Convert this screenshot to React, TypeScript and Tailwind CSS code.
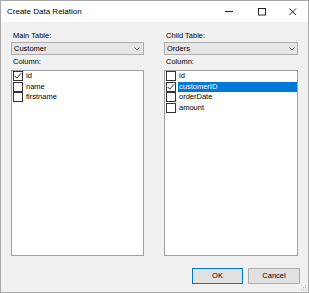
import React from "react";

const Check = () => (
  <svg width="8" height="8" viewBox="0 0 8 8" className="block">
    <polyline points="0.8,4 2.8,6.2 7.2,1.2" fill="none" stroke="#333" strokeWidth="1" />
  </svg>
);

const Box = ({ checked }: { checked?: boolean }) => (
  <div className="w-[10px] h-[10px] border border-[#333333] bg-white flex items-center justify-center shrink-0">
    {checked ? <Check /> : null}
  </div>
);

const Chevron = () => (
  <svg width="6" height="4" viewBox="0 0 6 4" className="block">
    <polyline points="0.5,0.5 3,3 5.5,0.5" fill="none" stroke="#555" strokeWidth="1" />
  </svg>
);

type Item = { name: string; checked?: boolean; selected?: boolean };

const Panel = ({
  label,
  value,
  items,
  width,
  chevPad,
}: {
  label: string;
  value: string;
  items: Item[];
  width: string;
  chevPad: string;
}) => (
  <div className={`${width} flex flex-col`}>
    <div className="h-[12px] leading-[12px] pl-[2px] text-black">{label}</div>
    <div className={`h-[13px] border border-[#adadad] bg-[#e5e5e5] flex items-center justify-between pl-[2px] ${chevPad}`}>
      <span className="leading-[11px]">{value}</span>
      <Chevron />
    </div>
    <div className="mt-[1px] h-[12px] leading-[12px] pl-[2px]">Column:</div>
    <div className="mt-[2px] h-[186px] border border-[#a0a0a0] bg-white pt-0 pl-[1px] pr-0">
      {items.map((it) => (
        <div key={it.name} className="h-[10.5px] flex items-start">
          <Box checked={it.checked} />
          <div
            className={`ml-[2px] h-[10px] leading-[10px] pl-[1px] ${
              it.selected ? "flex-1 bg-[#0078d7] text-white" : "text-black"
            }`}
          >
            {it.name}
          </div>
        </div>
      ))}
    </div>
  </div>
);

export default function App() {
  return (
    <div
      className="w-[309px] h-[293px] border border-[#a8a8a8] bg-[#f0f0f0] flex flex-col text-[7.5px] text-black"
      style={{ fontFamily: '"Liberation Sans", Arial, sans-serif' }}
    >
      <div className="h-[21px] bg-white flex items-center shrink-0">
        <span className="pl-[6px] text-[8px] leading-[10px] pt-[1px] flex-1">Create Data Relation</span>
        <div className="flex items-center">
          <svg width="9" height="9" viewBox="0 0 9 9" className="block mr-[24px]">
            <line x1="0" y1="4.5" x2="8" y2="4.5" stroke="#222" strokeWidth="1" />
          </svg>
          <svg width="8" height="8" viewBox="0 0 8 8" className="block mr-[23px]">
            <rect x="0.5" y="0.5" width="7" height="6.5" fill="none" stroke="#222" strokeWidth="1" />
          </svg>
          <svg width="8" height="8" viewBox="0 0 8 8" className="block mr-[11px]">
            <line x1="0.5" y1="0.5" x2="7" y2="7" stroke="#222" strokeWidth="1" />
            <line x1="7" y1="0.5" x2="0.5" y2="7" stroke="#222" strokeWidth="1" />
          </svg>
        </div>
      </div>
      <div className="pt-[8px] pl-[10px] flex gap-[20px]">
        <Panel
          label="Main Table:"
          value="Customer"
          width="w-[133px]"
          chevPad="pr-[3px]"
          items={[{ name: "id", checked: true }, { name: "name" }, { name: "firstname" }]}
        />
        <Panel
          label="Child Table:"
          value="Orders"
          width="w-[134px]"
          chevPad="pr-[2px]"
          items={[
            { name: "id" },
            { name: "customerID", checked: true, selected: true },
            { name: "orderDate" },
            { name: "amount" },
          ]}
        />
      </div>
      <div className="relative flex-1 flex justify-end items-start pt-[12px] pr-[8px] gap-[5px]">
        <button className="w-[51px] h-[16px] border border-[#0078d7] bg-[#e1e1e1] text-[7.5px] leading-[14px]">
          OK
        </button>
        <button className="w-[52px] h-[16px] border border-[#adadad] bg-[#e1e1e1] text-[7.5px] leading-[14px]">
          Cancel
        </button>
        <svg width="6" height="6" viewBox="0 0 6 6" className="absolute right-[1px] bottom-[1px]">
          <rect x="4" y="0" width="1" height="1" fill="#b5b5b5" />
          <rect x="2" y="2" width="1" height="1" fill="#b5b5b5" />
          <rect x="4" y="2" width="1" height="1" fill="#b5b5b5" />
          <rect x="0" y="4" width="1" height="1" fill="#b5b5b5" />
          <rect x="2" y="4" width="1" height="1" fill="#b5b5b5" />
          <rect x="4" y="4" width="1" height="1" fill="#b5b5b5" />
        </svg>
      </div>
    </div>
  );
}
